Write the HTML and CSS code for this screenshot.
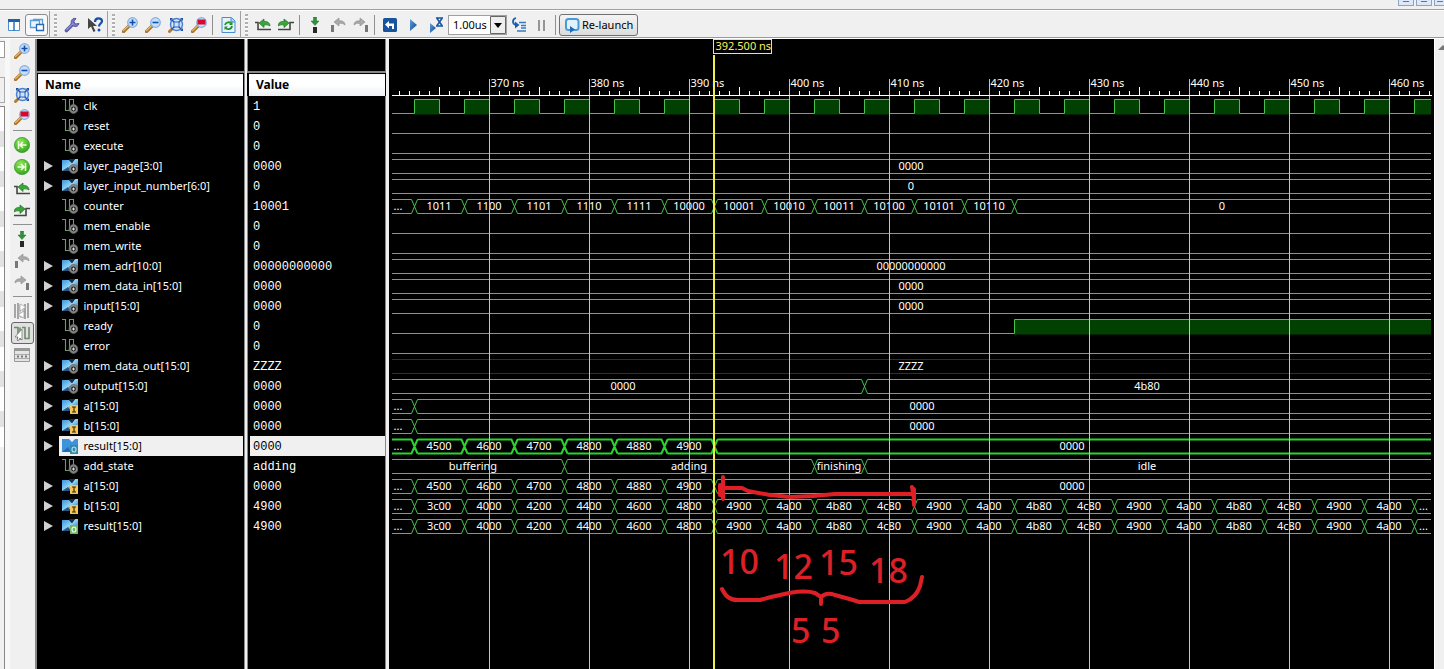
FILE: index.html
```html
<!DOCTYPE html>
<html lang="en">
<head>
<meta charset="utf-8">
<title>Waveform viewer</title>
<link rel="stylesheet" href="styles.css">
</head>
<body>
<svg class="defs" aria-hidden="true">
  <defs>
    <linearGradient id="bluebox" x1="0" y1="0" x2="1" y2="1"><stop offset="0" stop-color="#2f8fd6"/><stop offset=".5" stop-color="#8fd2f6"/><stop offset="1" stop-color="#1c4f86"/></linearGradient>
    <linearGradient id="play" x1="0" y1="0" x2="1" y2="1"><stop offset="0" stop-color="#5aa3e4"/><stop offset="1" stop-color="#123f86"/></linearGradient>
    <radialGradient id="greenball" cx=".4" cy=".3" r=".8"><stop offset="0" stop-color="#8fe85a"/><stop offset="1" stop-color="#2b9a17"/></radialGradient>
    <symbol id="lens" viewBox="0 0 16 16"><path d="M7 9 1.500 14.500" stroke="#a8742c" stroke-width="3.200" stroke-linecap="round"/><path d="M6.500 8.800 1.500 13.600" stroke="#e8b768" stroke-width="1.300" stroke-linecap="round"/><circle cx="10.500" cy="5.500" r="4.800" fill="#c4def8" stroke="#86aee0" stroke-width="1.200"/></symbol>
    <symbol id="zoom-in" viewBox="0 0 16 16"><use href="#lens"/><path d="M10.500 2.500v6M7.500 5.500h6" stroke="#174fa8" stroke-width="1.600"/></symbol>
    <symbol id="zoom-out" viewBox="0 0 16 16"><use href="#lens"/><path d="M7.500 5.500h6" stroke="#174fa8" stroke-width="1.600"/></symbol>
    <symbol id="zoom-fit" viewBox="0 0 16 16"><path d="M4 12 1.500 14.500" stroke="#b47c30" stroke-width="3" stroke-linecap="round"/><circle cx="8.500" cy="7.500" r="6" fill="#cfe3fa" stroke="#4a82d0" stroke-width="1.500"/><path d="M3.500 2.500l10 10M13.500 2.500l-10 10" stroke="#2350a4" stroke-width="1.200"/><path d="M6 5h5v5H6z" fill="#cfe3fa" stroke="#2a62b8"/><path d="M2 1h3L2 4zM15 1v3l-3-3zM15 14h-3l3-3z" fill="#2350a4"/></symbol>
    <symbol id="zoom-red" viewBox="0 0 16 16"><use href="#lens"/><path d="M6.500 2.500h8v5h-8z" fill="#d8082c"/></symbol>
    <symbol id="columns" viewBox="0 0 16 16"><path d="M2.500 2.500h11v11h-11z" fill="#fff" stroke="#4a8fd0"/><path d="M2 2h12v3H2z" fill="#1e5fae"/><path d="M8 4v10" stroke="#2d72bd" stroke-width="1.500"/></symbol>
    <symbol id="windows" viewBox="0 0 16 16"><path d="M4 2.500h9.500v5" fill="none" stroke="#5a9cd8" stroke-width="1.300"/><path d="M1.500 3.500h9v7h-9z" fill="#eaf4ff" stroke="#5a9cd8" stroke-width="1.300"/><path d="M7.500 7.500h7v6h-7z" fill="#fff" stroke="#2569b8" stroke-width="1.300"/></symbol>
    <symbol id="wrench" viewBox="0 0 16 16"><path d="M2.500 13.500 9.500 6.500" stroke="#5c5ca8" stroke-width="3.600" stroke-linecap="round"/><path d="M12 1.500a4 4 0 1 0 3 5L11.500 7 9.500 5z" fill="#7c7cc4" stroke="#5656a0"/><path d="M2.500 13 9 6.500" stroke="#b4b4e4"/></symbol>
    <symbol id="help" viewBox="0 0 16 16"><path d="M1 1v11l3-2.500L6.500 15l2-1L6 9h4z" fill="#454545"/><path d="M8 5c0-5 7-4.500 7-1 0 2.500-3 2.500-3 5.500" fill="none" stroke="#174fa8" stroke-width="2.200"/><circle cx="12" cy="13" r="1.500" fill="#174fa8"/></symbol>
    <symbol id="refresh" viewBox="0 0 16 16"><path d="M2 .5h9.500L15 4v11.500H2z" fill="#e4f1ff" stroke="#4a8cd0"/><path d="M11 1v4h4" fill="#a7cdf2" stroke="#4a8cd0"/><path d="M5 8c.5-3 5-3.500 6-1.500M12 9c-.5 3.500-5 4-6.500 1.800" fill="none" stroke="#26922b" stroke-width="1.800"/><path d="M12.500 4.500V8H9zM4.500 13V9.500H8z" fill="#26922b"/></symbol>
    <symbol id="edge-prev" viewBox="0 0 16 16"><path d="M0 5.500h3v7h13" fill="none" stroke="#454545" stroke-width="1.600"/><path d="M15 9c0-4-4-5-6-4.500V2L4 6l5 4.500V8c3-.5 4 0 6 1z" fill="#3aa63a" stroke="#1c701f" stroke-width=".7"/></symbol>
    <symbol id="edge-next" viewBox="0 0 16 16"><path d="M0 12.500h12v-7h4" fill="none" stroke="#454545" stroke-width="1.600"/><path d="M0 9c0-4 4-5 6-4.500V2l5 4-5 4.500V8C3 7.500 2 8 0 9z" fill="#3aa63a" stroke="#1c701f" stroke-width=".7"/></symbol>
    <symbol id="marker" viewBox="0 0 16 16"><path d="M6.500 0h3v4H12L8 8.500 4 4h2.500z" fill="#31913a" stroke="#1f7028" stroke-width=".5"/><path d="M6 10h4v6H6z" fill="#282828"/></symbol>
    <symbol id="mark-prev" viewBox="0 0 16 16"><path d="M1 8h3v7H1z" fill="#777"/><path d="M15 8c0-4-4-4.500-6-4V1L4 5l5 4V6.500c3-.5 4 0 6 1.500z" fill="#aaa" stroke="#888" stroke-width=".6"/></symbol>
    <symbol id="mark-next" viewBox="0 0 16 16"><path d="M12 8h3v7h-3z" fill="#777"/><path d="M1 8c0-4 4-4.500 6-4V1l5 4-5 4V6.500C4 6 3 6.500 1 8z" fill="#aaa" stroke="#888" stroke-width=".6"/></symbol>
    <symbol id="restart" viewBox="0 0 16 16"><rect x="1" y="1" width="14" height="14" rx="1.500" fill="#17539f"/><path d="M3 7.500 7 4v2.500h5V12h-2V9H7v2.500z" fill="#fff"/></symbol>
    <symbol id="run" viewBox="0 0 16 16"><path d="M5 2l7 6-7 6z" fill="url(#play)"/></symbol>
    <symbol id="run-time" viewBox="0 0 16 16"><path d="M2 6l6 5-6 5z" fill="url(#play)"/><path d="M8 1h7M8 9h7M9 1.500l5 7M14 1.500l-5 7" stroke="#17539f" stroke-width="1.500"/></symbol>
    <symbol id="step" viewBox="0 0 16 16"><path d="M5 1C1 2 1 7 5 8" fill="none" stroke="#1b5db0" stroke-width="1.800"/><path d="M4 4.500 8.500 8 4 11.500z" fill="#1b5db0"/><path d="M8 5.500h7M10 8.500h5M10 11h5M6 14h9" stroke="#3379c4" stroke-width="1.400"/></symbol>
    <symbol id="pause" viewBox="0 0 16 16"><path d="M5 3v11M10 3v11" stroke="#969696" stroke-width="2"/></symbol>
    <symbol id="relaunch" viewBox="0 0 16 16"><rect x="2" y="2" width="12.500" height="11" rx="2.500" fill="#e1f2ff" stroke="#4a9ad8" stroke-width="2"/><path d="M6 9v7l5-3.500z" fill="#1c6db4"/></symbol>
    <symbol id="go-start" viewBox="0 0 16 16"><circle cx="8" cy="8" r="7.600" fill="url(#greenball)" stroke="#2e9222" stroke-width=".7"/><path d="M4.500 4v8M12.500 8H6.500M9 5 6 8l3 3" fill="none" stroke="#efffdf" stroke-width="1.500"/></symbol>
    <symbol id="go-end" viewBox="0 0 16 16"><circle cx="8" cy="8" r="7.600" fill="url(#greenball)" stroke="#2e9222" stroke-width=".7"/><path d="M11.500 4v8M3.500 8h6M7 5l3 3-3 3" fill="none" stroke="#efffdf" stroke-width="1.500"/></symbol>
    <symbol id="swap" viewBox="0 0 16 16"><path d="M1 1v14M4 0v16M11 1v15M14 0v15" stroke="#999" stroke-width="1.700"/><path d="M6 2v12h3V3" fill="none" stroke="#aaa"/><path d="M6 1l6 3-6 4zM10 8v7l-6-3z" fill="#fff" stroke="#999" stroke-width=".7"/></symbol>
    <symbol id="snap" viewBox="0 0 16 16"><path d="M0 2.500h4V14h3M8 2.500h3v11h4V2M6 2.500v6" fill="none" stroke="#6f8969" stroke-width="1.600"/><path d="M8 4v11l-2-2-2 3-1-1 1-3H1z" fill="#fff" stroke="#666" stroke-width=".7"/></symbol>
    <symbol id="panel" viewBox="0 0 16 16"><path d="M.5 1.500h15v13H.5z" fill="#e4e4e4" stroke="#999"/><path d="M0 1h16v3H0z" fill="#999"/><path d="M1 7.500h14M1 11.500h14" stroke="#aaa"/><path d="M3 9.500h2M7 9.500h2M11 9.500h2" stroke="#777" stroke-width="2"/></symbol>
    <symbol id="gear" viewBox="0 0 16 16"><circle cx="11.500" cy="11" r="4.400" fill="#888" stroke="#666" stroke-width=".8"/><circle cx="11.500" cy="11" r="2.400" fill="#222"/><path d="M11.500 9.500v3M10 11h3" stroke="#ddd"/></symbol>
    <symbol id="sig" viewBox="0 0 16 16"><path d="M0 1.500h3.500v11h4v-11h4v7" fill="none" stroke="#72986c" stroke-width="1.100"/><use href="#gear"/></symbol>
    <symbol id="bus-base" viewBox="0 0 16 16"><path d="M0 2h7l3 3 3-4h3v12H0z" fill="url(#bluebox)"/><path d="M7 1h6l-3 4z" fill="#17344f"/><path d="M0 13 6 9l3 4z" fill="#153b68" opacity=".8"/></symbol>
    <symbol id="bus" viewBox="0 0 16 16"><use href="#bus-base"/><use href="#gear"/></symbol>
    <symbol id="bus-in" viewBox="0 0 16 16"><use href="#bus-base"/><path d="M8 7h8v9H8z" fill="#f4c65a"/><path d="M10 9h4M10 14h4M12 9v5" stroke="#3a2a00" stroke-width="1.200"/></symbol>
    <symbol id="bus-out" viewBox="0 0 16 16"><use href="#bus-base"/><path d="M8 7h8v9H8z" fill="#72b565"/><ellipse cx="12" cy="11.500" rx="2" ry="2.500" fill="none" stroke="#eaffea" stroke-width="1.200"/></symbol>
    <symbol id="bus-sel" viewBox="0 0 16 16"><path d="M0 1h7l3 3 3-3h3v13H0z" fill="#3d94dc"/><path d="M0 14 6 9l3 5z" fill="#206cb9"/><path d="M8 7h8v9H8z" fill="#3787a6"/><ellipse cx="12" cy="11.500" rx="2" ry="2.500" fill="none" stroke="#a0e4f0" stroke-width="1.200"/></symbol>
  </defs>
</svg>

<div class="app">
  <header class="titlebar">
    <button class="winbtn" aria-label="Minimize"></button>
    <button class="winbtn" aria-label="Restore"></button>
    <button class="winbtn winbtn-cut" aria-label="Close"></button>
  </header>

  <nav class="toolbar" aria-label="Main toolbar">
    <div class="group group-first">
      <button class="tool" aria-label="Tile"><svg><use href="#columns"/></svg></button>
      <button class="tool pressed" aria-label="Float"><svg><use href="#windows"/></svg></button>
    </div>
    <div class="group"><span class="grip"></span>
      <button class="tool" aria-label="Preferences"><svg><use href="#wrench"/></svg></button>
      <button class="tool" aria-label="Help"><svg><use href="#help"/></svg></button>
    </div>
    <div class="group"><span class="grip"></span>
      <button class="tool" aria-label="Zoom in"><svg><use href="#zoom-in"/></svg></button>
      <button class="tool" aria-label="Zoom out"><svg><use href="#zoom-out"/></svg></button>
      <button class="tool" aria-label="Zoom to full view"><svg><use href="#zoom-fit"/></svg></button>
      <button class="tool" aria-label="Zoom to cursor"><svg><use href="#zoom-red"/></svg></button>
      <span class="sep"></span>
      <button class="tool" aria-label="Refresh"><svg><use href="#refresh"/></svg></button>
    </div>
    <div class="group group-last"><span class="grip"></span>
      <button class="tool" aria-label="Previous transition"><svg><use href="#edge-prev"/></svg></button>
      <button class="tool" aria-label="Next transition"><svg><use href="#edge-next"/></svg></button>
      <span class="sep"></span>
      <button class="tool" aria-label="Add marker"><svg><use href="#marker"/></svg></button>
      <button class="tool" aria-label="Previous marker"><svg><use href="#mark-prev"/></svg></button>
      <button class="tool" aria-label="Next marker"><svg><use href="#mark-next"/></svg></button>
      <span class="sep"></span>
      <button class="tool" aria-label="Restart"><svg><use href="#restart"/></svg></button>
      <button class="tool" aria-label="Run all"><svg><use href="#run"/></svg></button>
      <button class="tool" aria-label="Run for time"><svg><use href="#run-time"/></svg></button>
      <div class="combo">
        <select aria-label="Run time"><option>1.00us</option></select>
        <svg class="combo-arrow" viewBox="0 0 16 18" aria-hidden="true"><path class="combo-face" d="M.5.5h15v17H.5z"/><path d="M4 7h8l-4 5z"/></svg>
      </div>
      <button class="tool" aria-label="Step"><svg><use href="#step"/></svg></button>
      <button class="tool" aria-label="Break"><svg><use href="#pause"/></svg></button>
      <span class="sep"></span>
      <button class="relaunch"><svg><use href="#relaunch"/></svg>Re-launch</button>
    </div>
  </nav>

  <main class="main">
    <aside class="dock"><div class="dock-tab"></div><div class="dock-box"></div><div class="dock-list"></div></aside>
    <nav class="sidebar" aria-label="Wave toolbar">
      <button class="side" aria-label="Zoom in"><svg><use href="#zoom-in"/></svg></button>
      <button class="side" aria-label="Zoom out"><svg><use href="#zoom-out"/></svg></button>
      <button class="side" aria-label="Zoom to full view"><svg><use href="#zoom-fit"/></svg></button>
      <button class="side" aria-label="Zoom to cursor"><svg><use href="#zoom-red"/></svg></button>
      <span class="rule"></span>
      <button class="side" aria-label="Go to start"><svg><use href="#go-start"/></svg></button>
      <button class="side" aria-label="Go to end"><svg><use href="#go-end"/></svg></button>
      <button class="side" aria-label="Previous transition"><svg><use href="#edge-prev"/></svg></button>
      <button class="side" aria-label="Next transition"><svg><use href="#edge-next"/></svg></button>
      <span class="rule"></span>
      <button class="side" aria-label="Add marker"><svg><use href="#marker"/></svg></button>
      <button class="side" aria-label="Previous marker"><svg><use href="#mark-prev"/></svg></button>
      <button class="side" aria-label="Next marker"><svg><use href="#mark-next"/></svg></button>
      <span class="rule"></span>
      <button class="side" aria-label="Swap cursors"><svg><use href="#swap"/></svg></button>
      <button class="side pressed" aria-label="Snap to transition"><svg><use href="#snap"/></svg></button>
      <button class="side" aria-label="Floating ruler"><svg><use href="#panel"/></svg></button>
    </nav>
    <section class="pane pane-name">
      <div class="pane-top"></div>
      <table class="list"><thead><tr><th>Name</th></tr></thead><tbody id="names"></tbody></table>
    </section>
    <section class="pane pane-value">
      <div class="pane-top"></div>
      <table class="list"><thead><tr><th>Value</th></tr></thead><tbody id="values"></tbody></table>
    </section>
    <section class="waves"><svg id="waves" role="img" aria-label="Signal waveforms"></svg></section>
    <div class="scroller"><svg viewBox="0 0 10 6"><path d="M5 1l5 5H0z"/></svg></div>
  </main>
</div>
<script src="waves.js"></script>
</body>
</html>
```
FILE: styles.css
```css
* { box-sizing: border-box; }
body { margin: 0; background: #f0f0f0; font-family: "Noto Sans", "Open Sans", sans-serif; font-size: 11px; color: #000; overflow: hidden; }
button { margin: 0; padding: 0; border: 1px solid transparent; background: none; font: inherit; color: inherit; }
.defs { position: absolute; width: 0; height: 0; }
.app { display: flex; flex-direction: column; height: 100vh; }

.titlebar { display: flex; justify-content: flex-end; gap: 2px; height: 10px; flex: none; border-bottom: 1px solid #a0a0a0; }
.winbtn { width: 16px; height: 6px; border: 1px solid #8ba3c4; border-top: 0; background: linear-gradient(#5f7799, #5f7799) center 1px / 6px 1px no-repeat #dce8f8; }
.winbtn-cut { width: 10px; border-right: 0; }

.toolbar { display: flex; height: 29px; flex: none; border-top: 1px solid #fff; border-bottom: 1px solid #fff; box-shadow: inset 0 -1px #999; }
.group { display: flex; align-items: center; padding-right: 1px; border-right: 1px solid #a0a0a0; }
.group-first { padding-left: 2px; }
.group-last { border-right: 0; }
.grip { width: 3px; height: 22px; margin: 0 3px 0 4px; background: repeating-linear-gradient(#b0b0b0 0 2px, #f8f8f8 2px 4px); }
.tool { display: grid; place-items: center; width: 23px; height: 22px; }
.tool svg, .side svg, .relaunch svg, .list svg { display: block; width: 16px; height: 16px; fill: none; }
.pressed { border: 1px solid #8c8c8c; border-radius: 3px; background: #f8f8f8; }
.sep { width: 1px; height: 20px; margin: 0 3px 0 2px; background: #909090; }
.combo { display: grid; width: 59px; height: 20px; margin-left: 1px; }
.combo select { grid-area: 1 / 1; appearance: none; width: 100%; height: 20px; margin: 0; padding: 0 16px 0 4px; border: 1px solid #a0a0a0; border-radius: 0; background: #fff; font: 11px "Noto Sans", sans-serif; color: #000; }
.combo-arrow { grid-area: 1 / 1; justify-self: end; align-self: center; width: 16px; height: 18px; margin-right: 1px; pointer-events: none; }
.combo-face { fill: #eee; stroke: #666; }
.relaunch { display: flex; align-items: center; gap: 2px; height: 22px; padding: 0 4px; border: 1px solid #707070; border-radius: 3px; background: linear-gradient(#f4f4f4, #dcdcdc); font-size: 11px; }

.main { display: flex; flex: 1; min-height: 0; overflow: hidden; }
.dock { display: flex; flex-direction: column; width: 5px; flex: none; padding-top: 2px; }
.dock-tab { height: 17px; border: 1px solid #999; border-left: 0; background: #fff; }
.dock-box { height: 26px; margin: 19px 0 3px; border: 1px solid #aaa; border-left: 0; }
.dock-list { flex: 1; border: 1px solid #888; border-width: 1px 1px 0 0; background: linear-gradient(transparent 340px, #f0f0f0 340px), repeating-linear-gradient(#fff 0 24px, #e2e2e2 24px 40px); }
.sidebar { display: flex; flex-direction: column; align-items: center; width: 30px; flex: none; padding: 1px 0 0 4px; box-shadow: inset 5px 0 #f8f8f8; }
.side { display: grid; place-items: center; width: 23px; height: 22px; flex: none; }
.side.pressed { background: #e0e0e0; border-color: #666; }
.rule { width: 19px; height: 1px; margin: 2px 0 3px; background: #909090; }

.pane { background: #000; color: #fff; overflow: hidden; flex: none; }
.pane-name { width: 210px; border-left: 2px solid #888; border-right: 1px solid #888; }
.pane-value { width: 144px; border-left: 2px solid #f0f0f0; border-right: 3px solid #f0f0f0; box-shadow: inset 1px 0 #888, inset -1px 0 #888; }
.pane-top { height: 34px; border-bottom: 2px solid #888; }
.list { width: 100%; border-collapse: collapse; }
.list th { height: 22px; padding: 0 0 0 7px; text-align: left; font-size: 12px; font-weight: 700; line-height: 20px; color: #000; background: linear-gradient(#fff 45%, #eceef1); border: 1px solid #000; border-bottom: 0; }
.pane-value th { border-left-width: 2px; }
.list td { height: 20px; padding: 0; line-height: 20px; white-space: nowrap; }
.sig { display: flex; align-items: center; height: 20px; margin-right: 1px; }
.expander { width: 21px; height: 20px; display: grid; place-items: center; }
.list .expander svg { width: 9px; height: 10px; fill: #d0d0d0; }
.label { display: flex; flex: 1; align-items: center; gap: 6px; height: 20px; padding-left: 3px; }
.value { height: 20px; margin: 0 1px 0 2px; padding-left: 3px; font-family: "Liberation Mono", monospace; font-size: 12px; line-height: 22px; }
.selected .label, .selected .value { background: #f0f0f0; color: #000; }

.waves { flex: 1; min-width: 0; background: #000; }
.waves svg { display: block; width: 100%; height: 100%; }
.trace { fill: none; stroke: #44c448; stroke-width: 1; }
.trace-highz { stroke: #1c1ccc; }
.trace-selected { stroke: #2bd32e; stroke-width: 2; }
.fill { fill: #004000; }
.grid { stroke: #c4c4c4; }
.tick { stroke: #fff; }
.text { fill: #fff; font-size: 11px; }
.mid { text-anchor: middle; }
.cursor { stroke: #f0f048; stroke-width: 2; }
.cursor-box { fill: #000; stroke: #f0f048; }
.cursor-text { fill: #f4f460; font-size: 11px; }
.pen { fill: none; stroke: #de2026; stroke-width: 4; stroke-linecap: round; stroke-linejoin: round; }
.note { fill: #de2026; font-size: 34px; font-weight: 500; }
.scroller { width: 10px; flex: none; border-left: 1px solid #fff; overflow: hidden; }
.scroller svg { display: block; width: 10px; height: 6px; margin: 5px 0 0 3px; fill: #777; }
```
FILE: waves.js
```js
const W = 'waves', bits = '4900 4a00 4b80 4c80'.split(' ');
// Evenly spaced 5 ns segments that begin at 362.5 ns.
const steps = (list) => [['...', null], ...list.map((v, i) => [v, 362.5 + 5 * i])];
const sums = ['3c00', '4000', '4200', '4400', '4600', '4800'];
for (let i = 0; i < 14; i++) sums.push(bits[i % 4]);
sums.push('...');
const a = steps(['4500', '4600', '4700', '4800', '4880', '4900', '0000']);
const one = (v) => [[v, null]];
const late = [['...', null], ['0000', 362.5]];

const signals = [
  { n: 'clk', v: '1', clock: true },
  { n: 'reset', v: '0' },
  { n: 'execute', v: '0' },
  { n: 'layer_page[3:0]', v: '0000', bus: one('0000') },
  { n: 'layer_input_number[6:0]', v: '0', bus: one('0') },
  { n: 'counter', v: '10001', icon: 'sig', bus: steps(['1011', '1100', '1101', '1110', '1111', '10000', '10001', '10010', '10011', '10100', '10101', '10110', '0']) },
  { n: 'mem_enable', v: '0' },
  { n: 'mem_write', v: '0' },
  { n: 'mem_adr[10:0]', v: '00000000000', bus: one('00000000000') },
  { n: 'mem_data_in[15:0]', v: '0000', bus: one('0000') },
  { n: 'input[15:0]', v: '0000', bus: one('0000') },
  { n: 'ready', v: '0', rise: 422.5 },
  { n: 'error', v: '0' },
  { n: 'mem_data_out[15:0]', v: 'ZZZZ', bus: one('ZZZZ'), cls: ' trace-highz' },
  { n: 'output[15:0]', v: '0000', bus: [['0000', null], ['4b80', 407.5]] },
  { n: 'a[15:0]', v: '0000', icon: 'bus-in', bus: late },
  { n: 'b[15:0]', v: '0000', icon: 'bus-in', bus: late },
  { n: 'result[15:0]', v: '0000', icon: 'bus-sel', bus: a, cls: ' trace-selected', selected: true },
  { n: 'add_state', v: 'adding', icon: 'sig', bus: [['buffering', null], ['adding', 377.5], ['finishing', 402.5], ['idle', 407.5]] },
  { n: 'a[15:0]', v: '0000', icon: 'bus-in', bus: a },
  { n: 'b[15:0]', v: '4900', icon: 'bus-in', bus: steps(sums) },
  { n: 'result[15:0]', v: '4900', icon: 'bus-out', bus: steps(sums) }
];

document.getElementById('names').innerHTML = signals.map((s) => {
  const icon = s.icon || (s.bus ? 'bus' : 'sig');
  const arrow = icon === 'sig' ? '' : '<svg viewBox="0 0 9 10"><path d="M0 0l9 5-9 5z"/></svg>';
  return `<tr class="${s.selected ? 'selected' : ''}"><td><div class="sig"><span class="expander">${arrow}</span><span class="label"><svg><use href="#${icon}"/></svg>${s.n}</span></div></td></tr>`;
}).join('');
document.getElementById('values').innerHTML = signals.map((s) =>
  `<tr class="${s.selected ? 'selected' : ''}"><td><div class="value">${s.v}</div></td></tr>`).join('');

const X = (t) => 100.5 + (t - 370) * 10;
const path = (d, cls) => `<path class="${cls}" d="${d}"/>`;
const text = (x, y, s, cls) => `<text class="${cls}" x="${x}" y="${y}">${s}</text>`;

function draw() {
  const svg = document.getElementById(W);
  const width = svg.clientWidth, height = svg.clientHeight;
  const left = 3, right = width - 3;
  let out = '', labels = '';

  signals.forEach((s, i) => {
    const hi = 60.5 + 20 * i, lo = hi + 14, cls = 'trace' + (s.cls || '');
    if (s.clock) {
      let d = `M${left} ${lo}`;
      for (let t = 362.5; X(t) < right; t += 5) {
        const x = X(t), e = Math.min(x + 25, right);
        out += `<rect class="fill" x="${x}" y="${hi}" width="${e - x}" height="15"/>`;
        d += `H${x}V${hi}H${e}` + (e < right ? `V${lo}` : '');
      }
      if (!d.endsWith(`H${right}`)) d += `H${right}`;
      out += path(d, cls);
    } else if (s.rise) {
      const x = X(s.rise);
      out += `<rect class="fill" x="${x}" y="${hi}" width="${right - x}" height="15"/>`;
      out += path(`M${left} ${lo}H${x}V${hi}H${right}`, cls);
    } else if (!s.bus) {
      out += path(`M${left} ${lo}H${right}`, cls);
    } else {
      let top = `M${left} ${hi}`, bot = `M${left} ${lo}`;
      s.bus.forEach(([v, t], k) => {
        const next = s.bus[k + 1];
        const from = t === null ? left : X(t), to = next ? X(next[1]) : right;
        if (t !== null) {
          top += `H${from - 3}L${from + 3} ${lo}M${from + 3} ${hi}`;
          bot += `H${from - 3}L${from + 3} ${hi}M${from + 3} ${lo}`;
        }
        const start = t === null && next && v !== '...' ? left - 9 : from;
        const mid = v === '...' ? from + (t === null ? 6 : 9) : Math.floor((start + to) / 2);
        labels += text(mid, hi + 10, v, 'text mid');
      });
      out += path(top + `H${right}` + bot + `H${right}`, cls);
    }
  });

  let ticks = `M${left} 56.5H${right + 1}`, grid = '', names = '';
  for (let t = 361; X(t) <= right + 1; t++) {
    if (t % 10 === 0) {
      grid += `M${X(t)} 40V${height}`;
      names += text(X(t) + 1, 48, t + ' ns', 'text');
    } else {
      ticks += `M${X(t)} ${t % 5 ? 52 : 48}V56`;
    }
  }
  const c = X(392.5);
  out += labels + names + path(grid, 'grid') + path(ticks, 'tick');
  out += path(`M${c - .5} 16V${height}`, 'cursor');
  out += `<rect class="cursor-box" x="${c - 1}" y=".5" width="58" height="14"/>` + text(c + 1, 11, '392.500 ns', 'cursor-text');

  // Pen notes: interval arrow, brace and figures.
  out += path('M334 438v22M331 446v10M335 449h18l6 3 22 4 20 2 23-1 22-2h76M523 448l2 12v-10M525 453v13', 'pen');
  out += path('M333 550C337 558 341 561 349 561H371L382 558 400 554C412 552 420 552 426 554L432 558V565M432 558C436 554 441 554 446 556L464 561 470 563H516C524 560 529 553 531 547L533 538', 'pen');
  out += text(331, 535, '10', 'note') + text(385, 540, '12', 'note') + text(430, 536, '15', 'note') + text(480, 544, '18', 'note') + text(402, 604, '5', 'note') + text(432, 604, '5', 'note');
  svg.innerHTML = out;
}
draw();
window.addEventListener('resize', draw);
```
